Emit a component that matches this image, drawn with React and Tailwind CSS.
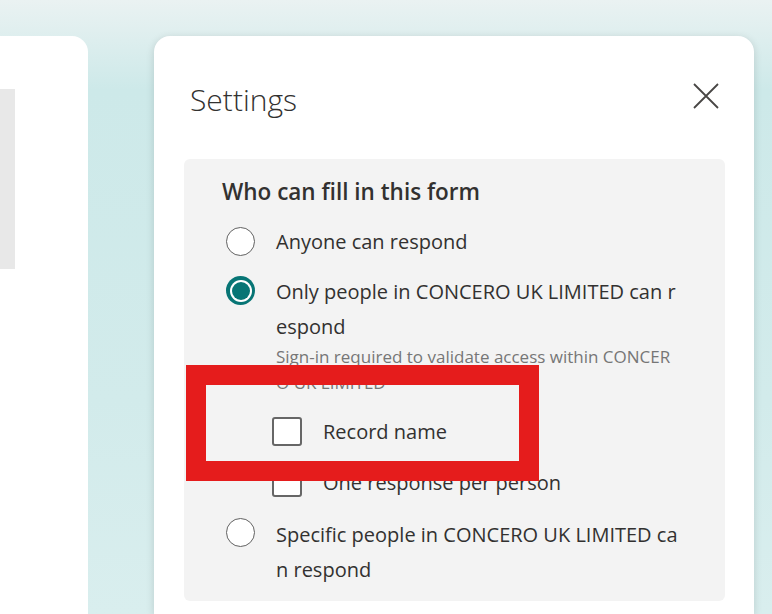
const font = { fontFamily: '"Segoe UI", "Open Sans", "Noto Sans", sans-serif' }

function Radio({ checked }) {
  if (checked) {
    return (
      <div className="w-[29px] h-[29px] rounded-full bg-[#077575] flex items-center justify-center shrink-0">
        <div className="w-[22px] h-[22px] rounded-full bg-white flex items-center justify-center">
          <div className="w-[18px] h-[18px] rounded-full bg-[#077575]" />
        </div>
      </div>
    )
  }
  return <div className="w-[29px] h-[29px] rounded-full border-[1.5px] border-[#616161] bg-white shrink-0" />
}

function Checkbox() {
  return <div className="w-[30px] h-[29px] rounded-[3px] border-2 border-[#666] bg-white shrink-0" />
}

export default function App() {
  return (
    <div
      style={font}
      className="relative w-[772px] h-[614px] overflow-hidden bg-[linear-gradient(180deg,#eaf2f2_0px,#cde9e9_90px,#d2ebeb_400px,#d9eeee_614px)] flex pt-[36px] text-[#323130]"
    >
      {/* left card, cut off */}
      <div className="w-[88px] bg-white rounded-tr-[16px] shrink-0">
        <div className="w-[15px] h-[180px] mt-[53px] bg-[#e8e8e8]" />
      </div>

      {/* settings panel */}
      <div className="ml-[66px] w-[600px] bg-white rounded-t-[16px] shadow-[0_2px_8px_rgba(0,0,0,0.14)] pl-[30px] pr-[29px] pt-[45px]">
        <div className="flex items-start justify-between pl-[6px] pr-[6px]">
          <h2 className="text-[30px] leading-[38px] font-light">Settings</h2>
          <button className="mt-[2px] text-[#484644]">
            <svg width="26" height="26" viewBox="0 0 26 26" fill="none" stroke="currentColor" strokeWidth="1.8">
              <path d="M1 1 L25 25 M25 1 L1 25" />
            </svg>
          </button>
        </div>

        <div className="mt-[40px] bg-[#f3f3f3] rounded-[6px] pl-[38px] pr-[20px] pt-[18px] pb-[14px]">
          <div className="text-[22.5px] leading-[30px] font-semibold">Who can fill in this form</div>

          <div className="mt-[17px] flex items-center gap-[21px] pl-[4px]">
            <Radio />
            <span className="text-[20px] leading-[35px]">Anyone can respond</span>
          </div>

          <div className="mt-[15px] flex items-start gap-[21px] pl-[4px]">
            <div className="mt-[2px]">
              <Radio checked />
            </div>
            <div>
              <div className="text-[20px] leading-[35px]">
                Only people in CONCERO UK LIMITED can r<br />espond
              </div>
              <div className="text-[17px] leading-[26px] text-[#767676]">
                Sign-in required to validate access within CONCER<br />O UK LIMITED
              </div>
            </div>
          </div>

          <div className="mt-[18px] flex items-center gap-[21px] pl-[50px]">
            <Checkbox />
            <span className="text-[20px] leading-[35px]">Record name</span>
          </div>

          <div className="mt-[16px] flex items-center gap-[21px] pl-[50px]">
            <Checkbox />
            <span className="text-[20px] leading-[35px]">One response per person</span>
          </div>

          <div className="mt-[17px] flex items-start gap-[21px] pl-[4px]">
            <div className="mt-[1px]">
              <Radio />
            </div>
            <div className="text-[20px] leading-[35px]">
              Specific people in CONCERO UK LIMITED ca<br />n respond
            </div>
          </div>
        </div>
      </div>

      {/* red annotation box */}
      <div className="absolute left-[186px] top-[365px] w-[353px] h-[116px] border-[20px] border-[#e51c1c]" />
    </div>
  )
}
